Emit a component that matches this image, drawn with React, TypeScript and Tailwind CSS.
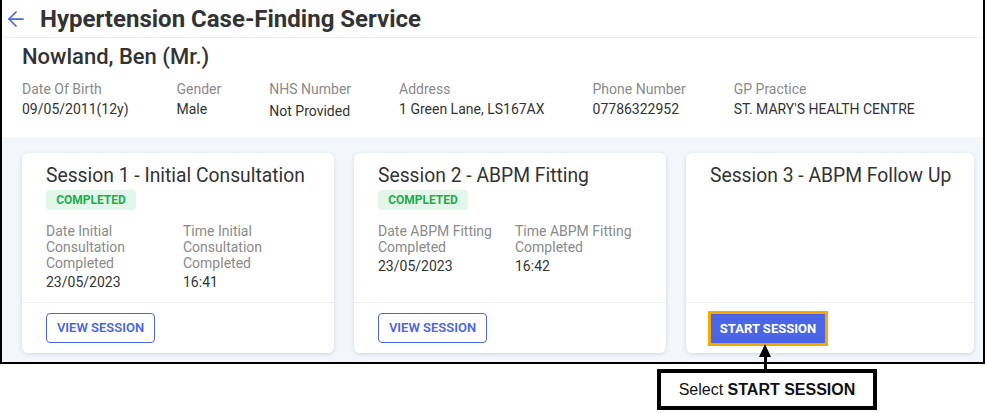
import React from 'react';
import { ArrowLeft } from 'lucide-react';

const patient = [
  { label: 'Date Of Birth', value: '09/05/2011(12y)' },
  { label: 'Gender', value: 'Male' },
  { label: 'NHS Number', value: 'Not Provided' },
  { label: 'Address', value: '1 Green Lane, LS167AX' },
  { label: 'Phone Number', value: '07786322952' },
  { label: 'GP Practice', value: "ST. MARY'S HEALTH CENTRE" },
];

type Session = {
  title: string;
  done: boolean;
  fields?: { label: string; value: string }[];
  width: string;
};

const sessions: Session[] = [
  {
    title: 'Session 1 - Initial Consultation',
    done: true,
    width: 'w-[312px]',
    fields: [
      { label: 'Date Initial Consultation Completed', value: '23/05/2023' },
      { label: 'Time Initial Consultation Completed', value: '16:41' },
    ],
  },
  {
    title: 'Session 2 - ABPM Fitting',
    done: true,
    width: 'w-[312px]',
    fields: [
      { label: 'Date ABPM Fitting Completed', value: '23/05/2023' },
      { label: 'Time ABPM Fitting Completed', value: '16:42' },
    ],
  },
  { title: 'Session 3 - ABPM Follow Up', done: false, width: 'w-[288px]' },
];

const SessionCard: React.FC<{ s: Session }> = ({ s }) => (
  <div className={`${s.width} flex flex-col rounded-md bg-white shadow-[0_1px_4px_rgba(60,80,130,0.18)]`}>
    <div className="h-[149px] px-6 pt-3">
      <h3 className="whitespace-nowrap text-[19.3px] leading-[22px] font-normal text-[#333]">{s.title}</h3>
      {s.done && (
        <span className="mt-[3px] inline-flex h-5 w-[90px] items-center justify-center rounded bg-[#e4f5ea] text-[12px] font-bold text-[#1cad4c]">
          COMPLETED
        </span>
      )}
      {s.fields && (
        <div className="mt-[12px] grid grid-cols-[137px_1fr]">
          {s.fields.map((f) => (
            <div key={f.label} className="pr-2">
              <div className="text-[14px] leading-4 text-[#8a8a8a]">{f.label}</div>
              <div className="mt-[3px] text-[14px] leading-4 text-[#333]">{f.value}</div>
            </div>
          ))}
        </div>
      )}
    </div>
    <div className="border-t border-[#eef0f4] px-6 pt-[10px] pb-[10px]">
      {s.done ? (
        <button className="h-[30px] w-[109px] rounded border border-[#4a65e6] text-[13px] font-semibold text-[#4a65e6]">
          VIEW SESSION
        </button>
      ) : (
        <button className="ml-[1px] mt-[1px] h-[29px] w-[114px] bg-[#4a65e6] text-[13px] font-bold text-white outline-[3px] outline-solid outline-[#f7a800]">
          START SESSION
        </button>
      )}
    </div>
  </div>
);

export default function App() {
  return (
    <div className="relative h-[413px] w-[985px] bg-white font-['Roboto',sans-serif]">
      <div className="border-x-2 border-b-2 border-black">
        <div className="flex h-[38px] items-center gap-3 border-b border-[#eeeeee] pl-[2px]">
          <ArrowLeft size={24} strokeWidth={1.75} className="text-[#4a65e6]" />
          <h1 className="text-[24px] font-bold text-[#333]">Hypertension Case-Finding Service</h1>
        </div>
        <div className="px-5 pt-[5px] pb-[16px]">
          <h2 className="text-[22px] leading-7 font-medium text-[#333]">Nowland, Ben (Mr.)</h2>
          <div className="mt-[8px] flex gap-12">
            {patient.map((p) => (
              <div key={p.label} className="text-[14px]">
                <div className="leading-5 text-[#8a8a8a]">{p.label}</div>
                <div className={`leading-5 text-[#333] ${p.label === 'NHS Number' ? 'mt-[2px]' : ''}`}>{p.value}</div>
              </div>
            ))}
          </div>
        </div>
        <div className="flex gap-5 bg-[#f3f6fb] pt-4 pb-[9px] pl-5">
          {sessions.map((s) => (
            <SessionCard key={s.title} s={s} />
          ))}
        </div>
      </div>

      {/* callout */}
      <div className="absolute left-[657px] top-[344px] flex w-[220px] flex-col items-center">
        <div className="ml-[-4px] flex flex-col items-center">
          <div className="h-0 w-0 border-x-[6px] border-b-[13px] border-x-transparent border-b-black" />
          <div className="h-[12px] w-[3px] bg-black" />
        </div>
        <div className="flex h-[41px] w-[220px] items-center justify-center border-4 border-black bg-white font-['Liberation_Sans',sans-serif] text-[16px] text-[#111]">
          <span>Select&nbsp;</span>
          <span className="font-bold">START SESSION</span>
        </div>
      </div>
    </div>
  );
}
